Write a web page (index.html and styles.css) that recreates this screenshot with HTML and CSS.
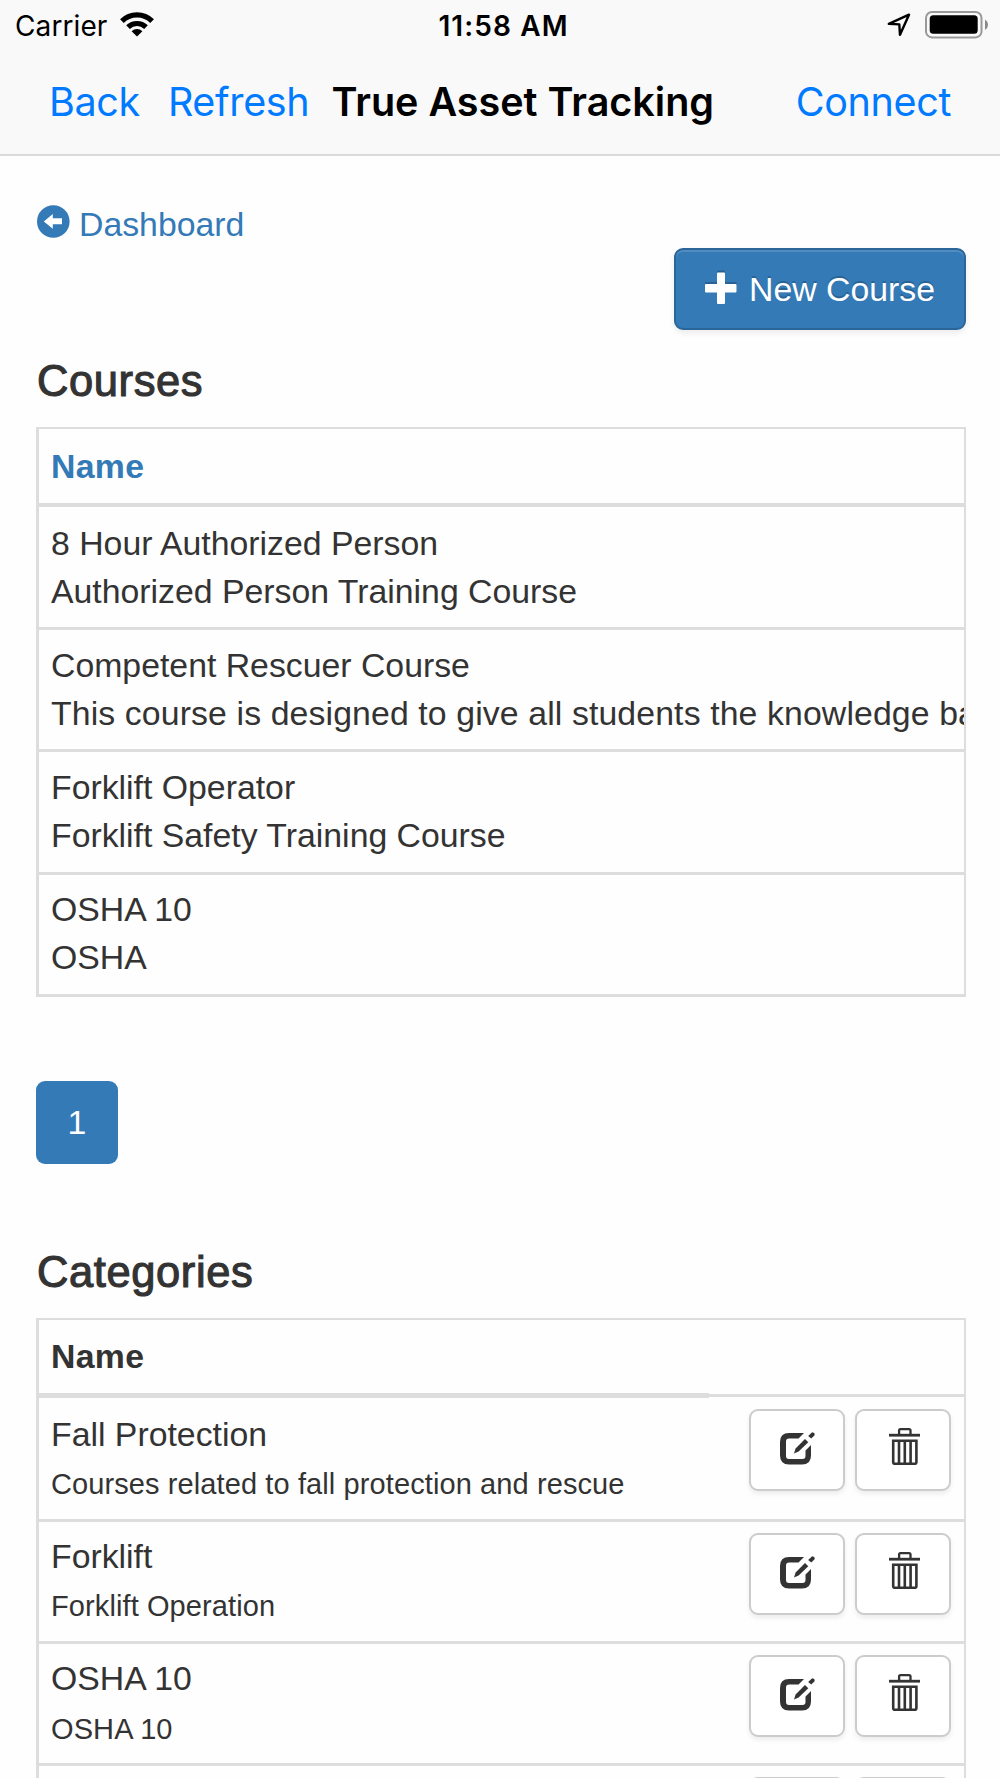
FILE: index.html
```
<!DOCTYPE html>
<html lang="en">
<head>
    <meta charset="UTF-8">
    <meta name="viewport" content="width=device-width, initial-scale=1.0">
    <title>True Asset Tracking</title>
    <link rel="stylesheet" href="styles.css">
</head>
<body>

<svg class="sprite" width="0" height="0">
    <symbol id="icon-edit" viewBox="0 0 35 33">
        <path d="M24 1H9Q0 1 0 10V23.5Q0 32.5 9 32.5H22Q31 32.5 31 23.5V13L25.5 18.5V24Q25.5 27 22.5 27H9Q6 27 6 24V9.6Q6 6.6 9 6.6H18.5Z"/>
        <path d="M14 21.6L15.6 16.4L25 7L28.3 10.3L18.6 19.6Z"/>
        <path d="M28.2 4L31.6 0.7Q32.6 0 33.6 0.7L34.4 1.6Q35 2.5 34.4 3.5L31.2 6.6Z"/>
    </symbol>
    <symbol id="icon-trash" viewBox="0 0 31 37">
        <path d="M0 5.8H31V8.6H0Z"/>
        <path d="M10.1 6V2.6Q10.1 1.2 11.5 1.2H20Q21.5 1.2 21.5 2.6V6" fill="none" stroke="currentColor" stroke-width="2.3"/>
        <path d="M4.2 12.8H27.4V34.3Q27.4 35.8 25.9 35.8H5.7Q4.2 35.8 4.2 34.3Z" fill="none" stroke="currentColor" stroke-width="2.6"/>
        <path d="M10 13V35.5M15.8 13V35.5M21.6 13V35.5" stroke="currentColor" stroke-width="2.6"/>
    </symbol>
</svg>

<header class="app-header">
    <div class="status-bar">
        <div class="status-left">
            <span>Carrier</span>
            <svg class="wifi" width="36" height="26" viewBox="0 0 36 26">
                <path d="M2.9 9.1A21.3 21.3 0 0 1 33.1 9.1M9 15.2A12.8 12.8 0 0 1 27 15.2" fill="none" stroke="#000" stroke-width="5.2"/>
                <path d="M18 24.5L12.6 19.2A7.6 7.6 0 0 1 23.4 19.2Z"/>
            </svg>
        </div>
        <div class="status-time">11:58 AM</div>
        <div class="status-right">
            <svg class="location" width="24" height="24" viewBox="0 0 24 24">
                <path d="M1.8 10.8L22 1.7L13 21.8L12.3 11.4Z" fill="none" stroke="#000" stroke-width="2.4" stroke-linejoin="round"/>
            </svg>
            <svg width="64" height="28" viewBox="0 0 64 28">
                <rect x="1" y="1" width="55.5" height="25.4" rx="6" fill="none" stroke="#999" stroke-width="2"/>
                <rect x="4.7" y="4.2" width="48" height="18.6" rx="3.6"/>
                <path d="M60 8.5Q63 10.5 63 13.7T60 19Z" fill="#888"/>
            </svg>
        </div>
    </div>
    <nav class="nav-bar">
        <a href="#" class="nav-back">Back</a>
        <a href="#" class="nav-refresh">Refresh</a>
        <h1>True Asset Tracking</h1>
        <a href="#" class="nav-connect">Connect</a>
    </nav>
</header>

<main class="container">
    <a href="#" class="back-link">
        <svg width="33" height="33" viewBox="0 0 33 33">
            <circle cx="16.3" cy="16.5" r="16.3" fill="#337ab7"/>
            <path d="M6.8 16.4L15.8 9V13.3H25V19.3H15.8V23.8Z" fill="#fff"/>
        </svg>
        <span>Dashboard</span>
    </a>

    <div class="toolbar">
        <button type="button" class="btn btn-primary">
            <svg width="32" height="33" viewBox="0 0 32 33">
                <path d="M13 0.5H19Q20 0.5 20 1.5V12H30.5Q31.5 12 31.5 13V19.5Q31.5 20.5 30.5 20.5H20V31Q20 32 19 32H13Q12 32 12 31V20.5H1Q0 20.5 0 19.5V13Q0 12 1 12H12V1.5Q12 0.5 13 0.5Z" fill="#fff"/>
            </svg>
            <span>New Course</span>
        </button>
    </div>

    <h4>Courses</h4>
    <div class="table">
        <div class="table-head"><div class="cell"><a href="#">Name</a></div></div>
        <div class="table-row"><div class="cell">8 Hour Authorized Person<br>Authorized Person Training Course</div></div>
        <div class="table-row"><div class="cell">Competent Rescuer Course<br><span class="description">This course is designed to give all students the knowledge ba</span></div></div>
        <div class="table-row"><div class="cell">Forklift Operator<br>Forklift Safety Training Course</div></div>
        <div class="table-row"><div class="cell">OSHA 10<br>OSHA</div></div>
    </div>

    <div class="pagination">
        <a href="#" class="page">1</a>
    </div>

    <h4>Categories</h4>
    <div class="table categories">
        <div class="table-head">
            <div class="cell">Name</div>
            <div class="cell-actions"></div>
        </div>
        <div class="table-row">
            <div class="cell">Fall Protection<br><small>Courses related to fall protection and rescue</small></div>
            <div class="cell-actions">
                <button type="button" class="btn btn-default"><svg class="edit"><use href="#icon-edit"/></svg></button>
                <button type="button" class="btn btn-default"><svg class="trash"><use href="#icon-trash"/></svg></button>
            </div>
        </div>
        <div class="table-row">
            <div class="cell">Forklift<br><small>Forklift Operation</small></div>
            <div class="cell-actions">
                <button type="button" class="btn btn-default"><svg class="edit"><use href="#icon-edit"/></svg></button>
                <button type="button" class="btn btn-default"><svg class="trash"><use href="#icon-trash"/></svg></button>
            </div>
        </div>
        <div class="table-row">
            <div class="cell">OSHA 10<br><small>OSHA 10</small></div>
            <div class="cell-actions">
                <button type="button" class="btn btn-default"><svg class="edit"><use href="#icon-edit"/></svg></button>
                <button type="button" class="btn btn-default"><svg class="trash"><use href="#icon-trash"/></svg></button>
            </div>
        </div>
        <div class="table-row">
            <div class="cell"></div>
            <div class="cell-actions">
                <button type="button" class="btn btn-default"></button>
                <button type="button" class="btn btn-default"></button>
            </div>
        </div>
    </div>
</main>

</body>
</html>
```
FILE: styles.css
```
* {
    box-sizing: border-box;
}

body {
    margin: 0;
    height: 1778px;
    overflow: hidden;
    background-color: #fefefe;
    color: #333;
    font-family: "Liberation Sans", Arial, sans-serif;
    font-size: 33.8px;
    line-height: 48.3px;
}

a {
    color: #337ab7;
    text-decoration: none;
}

svg {
    display: block;
    flex: none;
}

.sprite {
    display: none;
}

/* header */
.app-header {
    height: 156px;
    background-color: #f9f9f9;
    border-bottom: 2px solid #dadada;
    color: #000;
    font-family: Inter, sans-serif;
}

.status-bar {
    display: grid;
    grid-template-columns: 1fr auto 1fr;
    height: 50px;
    padding: 0 11px 0 15px;
    font-size: 28px;
    line-height: 52px;
}

.status-left,
.status-right {
    display: flex;
}

.status-left {
    gap: 12px;
    letter-spacing: 0.1px;
}

.wifi {
    margin-top: 12px;
}

.status-time {
    padding-left: 3px;
    font-weight: 600;
    letter-spacing: 1.1px;
}

.status-right {
    justify-content: flex-end;
    gap: 14px;
    padding-top: 11px;
}

.location {
    margin-top: 2px;
}

.nav-bar {
    display: flex;
    height: 104px;
    padding: 0 49px 0 48px;
    font-size: 39.5px;
    line-height: 104px;
    white-space: nowrap;
}

.nav-bar a {
    color: #007aff;
    letter-spacing: -0.35px;
}

.nav-bar h1 {
    margin: 0;
    font-size: 39.5px;
    font-weight: 600;
}

.nav-bar .nav-back {
    margin-left: 1px;
}

.nav-refresh {
    margin: 0 22px 0 28px;
}

.nav-connect {
    margin-left: auto;
}

/* content */
.container {
    padding: 44px 34px 0 36px;
}

.back-link {
    display: flex;
    gap: 9px;
    height: 48px;
}

.back-link svg {
    margin: 5px 0 0 1px;
}

.toolbar {
    display: flex;
    justify-content: flex-end;
    height: 82px;
}

.btn {
    display: flex;
    justify-content: center;
    height: 82px;
    padding: 0;
    border-radius: 9px;
    font: inherit;
}

.btn-primary {
    width: 292px;
    padding-top: 15px;
    gap: 12px;
    color: #fff;
    background-color: #337ab7;
    border: 2px solid #2b669a;
    text-shadow: 0 -2px 0 rgba(0, 0, 0, 0.2);
    box-shadow: inset 0 2px 0 rgba(255, 255, 255, 0.15), 0 3px 6px rgba(0, 0, 0, 0.08);
}

.btn-primary svg {
    margin-top: 7px;
    filter: drop-shadow(0 -2px 0 rgba(0, 0, 0, 0.2));
}

.btn-default {
    width: 96px;
    padding-top: 21px;
    color: #333;
    background-color: #fff;
    border: 2px solid #ccc;
    box-shadow: 0 3px 5px rgba(0, 0, 0, 0.07);
}

.edit {
    width: 35px;
    height: 33px;
    fill: currentColor;
}

.trash {
    width: 31px;
    height: 37px;
    margin: -4px 0 0 2px;
    fill: currentColor;
}

h4 {
    margin: 0;
    padding: 27px 0 0 1px;
    height: 97px;
    font-size: 43.5px;
    font-weight: normal;
    letter-spacing: 0.6px;
    -webkit-text-stroke: 1.1px #333;
}

.table {
    border: 2px solid #ddd;
    border-left-width: 3px;
    border-bottom: none;
    overflow: hidden;
    white-space: nowrap;
}

.table-head {
    height: 77.5px;
    border-bottom: 4px solid #ddd;
    font-weight: bold;
    letter-spacing: 0.3px;
}

.table-row {
    height: 122.3px;
    border-bottom: 3px solid #ddd;
}

.table-head + .table-row {
    height: 123.6px;
    padding-top: 1.7px;
}

.cell {
    padding: 10.5px 0 0 12px;
}

.table-head .cell {
    padding-top: 12.5px;
}

.description {
    letter-spacing: 0.12px;
}

small {
    font-size: 29px;
    letter-spacing: 0.1px;
}

.pagination {
    height: 224px;
    padding-top: 84px;
}

.page {
    display: block;
    width: 82px;
    height: 83px;
    border-radius: 9px;
    background-color: #337ab7;
    color: #fff;
    line-height: 83px;
    text-align: center;
}

/* categories */
.categories .table-head,
.categories .table-row {
    display: flex;
}

.categories .cell {
    width: 670px;
}

.categories .table-head {
    height: 78px;
    border-bottom: none;
}

.categories .table-head .cell {
    border-bottom: 5px solid #ddd;
}

.categories .table-head .cell-actions {
    height: 77px;
    padding: 0;
    border-bottom: 3px solid #ddd;
}

.cell-actions {
    display: flex;
    flex: 1;
    gap: 10px;
    padding: 11px 0 0 40px;
}

.categories .table-head + .table-row .cell-actions {
    padding-top: 9px;
}
```
